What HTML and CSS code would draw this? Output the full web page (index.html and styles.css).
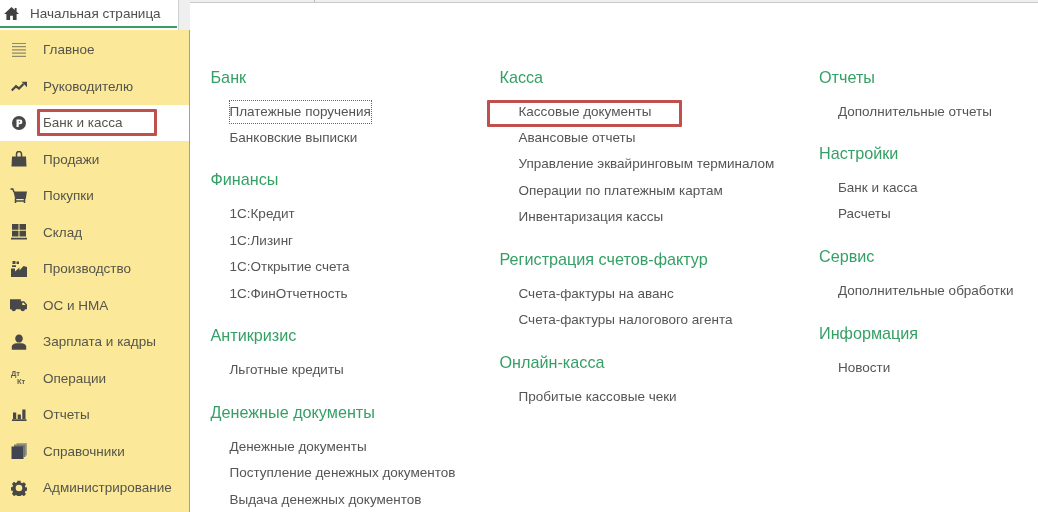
FILE: index.html
```html
<!DOCTYPE html>
<html lang="ru">
<head>
<meta charset="utf-8">
<title>Начальная страница</title>
<link rel="stylesheet" href="styles.css">
</head>
<body>
<div class="app">
  <div class="left">
    <div class="tabbar">
      <div class="tab">
        <svg class="tab-icon" viewBox="0 0 16 14"><path d="M8 0 0 7.500h2.500V14h4v-4.500h3V14h4V7.500H16L13.500 5.100V1h-2v2.200z"/></svg>
        <span>Начальная страница</span>
      </div>
    </div>
    <nav class="side">
      <a class="row"><svg class="ico lines" viewBox="0 0 16 16"><path d="M1 1.500h14M1 4.700h14M1 7.900h14M1 11.100h14M1 14.300h14"/></svg><span>Главное</span></a>
      <a class="row"><svg class="ico" viewBox="0 0 16 16"><path class="st" d="M.8 12.500 5 8.300l3 2.200L12.500 6"/><path d="M10.500 3.800H16V9.300z"/></svg><span>Руководителю</span></a>
      <a class="row active"><svg class="ico" viewBox="0 0 16 16"><path fill-rule="evenodd" d="M8 1a7 7 0 1 1 0 14A7 7 0 0 1 8 1zM5.500 4.500v7.500h2.200V9.300h1.300a2.400 2.400 0 0 0 0-4.800zm2.200 1.800h1.100a.7.700 0 0 1 0 1.300H7.700z"/></svg><span class="mark-wrap">Банк и касса<i class="mark mark-side"></i></span></a>
      <a class="row"><svg class="ico" viewBox="0 0 16 16"><path d="M1 5.500h14l.5 10H.5z"/><path class="st thin" d="M5.500 7V3a2.500 2.500 0 0 1 5 0V7"/></svg><span>Продажи</span></a>
      <a class="row"><svg class="ico cart" viewBox="0 0 17 16"><path d="M3.500 3.500H17l-1.300 7.500H5.200z"/><path class="st thin" d="M.5 1h2.300L4 4"/><path class="st thin" d="M5.500 10.500v4.500M14.500 10.500v4.500M5 13h10"/></svg><span>Покупки</span></a>
      <a class="row"><svg class="ico" viewBox="0 0 16 16"><path d="M1 0h6.500v5.700H1zM8.500 0H15v5.700H8.500zM1 6.700h6.500v5.700H1zM8.500 6.700H15v5.700H8.500zM0 13.700h16V15.500H0z"/></svg><span>Склад</span></a>
      <a class="row"><svg class="ico" viewBox="0 0 16 16"><path d="M0 16V7.500h4V10.500L8.500 6.500V9.500L12.500 5l3.500 1v10z"/><path d="M1.500 0h3v3h-3zM5.500 0.500H8V3H5.500zM1 4.200h4V6H1z"/></svg><span>Производство</span></a>
      <a class="row"><svg class="ico truck" viewBox="0 0 18 13"><path fill-rule="evenodd" d="M0 0h11.500v2H15l3 3.500v5H0zM13 3.500V6h3.500L14.500 3.500z"/><circle cx="4" cy="10.500" r="2.200"/><circle cx="13.500" cy="10.500" r="2.200"/></svg><span>ОС и НМА</span></a>
      <a class="row"><svg class="ico" viewBox="0 0 16 16"><path d="M8 .5c2.300 0 3.800 1.700 3.800 4 0 1.700-.9 3.300-2.300 4h-3C5.100 7.800 4.200 6.200 4.200 4.500c0-2.300 1.500-4 3.800-4z"/><path d="M.8 15.800v-3.300c0-1.800 2.400-3.100 4.700-3.300h5c2.300.2 4.700 1.500 4.700 3.300v3.300z"/></svg><span>Зарплата и кадры</span></a>
      <a class="row"><span class="dk"><b>Дт</b><b class="kt">Кт</b></span><span>Операции</span></a>
      <a class="row"><svg class="ico" viewBox="0 0 16 16"><path d="M2 5.500h3.200V12H2zM6.700 7.500h3.200V12H6.700zM11.300 2.500h3.200V12h-3.200zM1 12.300h14.500v1.700H1z"/></svg><span>Отчеты</span></a>
      <a class="row"><svg class="ico" viewBox="0 0 16 16"><path fill="#a5a38d" d="M5.500 0H16v12.500h-2V2.500H5.500z"/><path fill="#7b7a6a" d="M3 1.500h11.500V14h-2V4H3z"/><path fill="#3f4450" d="M.5 3.500h12V16H.5z"/></svg><span>Справочники</span></a>
      <a class="row"><svg class="ico" viewBox="0 0 16 16"><path fill-rule="evenodd" d="M6.500.7h3l.4 2 1.300.6 1.700-1.100 2.100 2.100-1.100 1.700.5 1.300 2 .4v3l-2 .4-.5 1.300 1.100 1.700-2.100 2.100-1.700-1.100-1.300.5-.4 2h-3l-.4-2-1.300-.5-1.700 1.100L.9 13.700 2 12l-.5-1.300-2-.4v-3l2-.4L2 5.600.9 3.900 3 1.800l1.700 1.100 1.300-.6zM8 4.700a3.300 3.300 0 1 0 0 6.600 3.300 3.300 0 0 0 0-6.600z"/></svg><span>Администрирование</span></a>
    </nav>
  </div>
  <div class="right">
    <div class="strip"><i class="tick"></i></div>
    <main class="content">
      <section class="col col-a">
        <h2>Банк</h2>
        <ul>
          <li><span class="focus">Платежные поручения</span></li>
          <li>Банковские выписки</li>
        </ul>
        <h2>Финансы</h2>
        <ul>
          <li>1С:Кредит</li>
          <li>1С:Лизинг</li>
          <li>1С:Открытие счета</li>
          <li>1С:ФинОтчетность</li>
        </ul>
        <h2>Антикризис</h2>
        <ul>
          <li>Льготные кредиты</li>
        </ul>
        <h2>Денежные документы</h2>
        <ul>
          <li>Денежные документы</li>
          <li>Поступление денежных документов</li>
          <li>Выдача денежных документов</li>
        </ul>
      </section>
      <section class="col col-b">
        <h2>Касса</h2>
        <ul>
          <li class="marked">Кассовые документы<i class="mark mark-main"></i></li>
          <li>Авансовые отчеты</li>
          <li>Управление эквайринговым терминалом</li>
          <li>Операции по платежным картам</li>
          <li>Инвентаризация кассы</li>
        </ul>
        <h2>Регистрация счетов-фактур</h2>
        <ul>
          <li>Счета-фактуры на аванс</li>
          <li>Счета-фактуры налогового агента</li>
        </ul>
        <h2>Онлайн-касса</h2>
        <ul>
          <li>Пробитые кассовые чеки</li>
        </ul>
      </section>
      <section class="col col-c">
        <h2>Отчеты</h2>
        <ul>
          <li>Дополнительные отчеты</li>
        </ul>
        <h2>Настройки</h2>
        <ul>
          <li>Банк и касса</li>
          <li>Расчеты</li>
        </ul>
        <h2>Сервис</h2>
        <ul>
          <li>Дополнительные обработки</li>
        </ul>
        <h2>Информация</h2>
        <ul>
          <li>Новости</li>
        </ul>
      </section>
    </main>
  </div>
</div>
</body>
</html>
```
FILE: styles.css
```css
* { box-sizing: border-box; }
html, body { margin: 0; height: 100%; overflow: hidden; }
body { font-family: "Liberation Sans", Arial, sans-serif; color: #555; background: #fff; }
.app { display: flex; width: 1038px; height: 512px; overflow: hidden; filter: blur(.35px); }

.left { width: 190px; flex: none; display: flex; flex-direction: column; background: #efefef; }
.tabbar { height: 30px; flex: none; display: flex; }
.tab { width: 179px; height: 30px; display: flex; align-items: center; gap: 11px; padding: 0 0 3px 4px; background: #fff; border-right: 1px solid #d0d0d0; position: relative; font-size: 13.500px; color: #4f4f4f; }
.tab::after { content: ""; position: absolute; left: 0; right: 1px; top: 26px; height: 2px; background: #3b9d6c; }
.tab-icon { width: 15px; height: 13px; fill: #404040; }

.side { flex: 1; background: #fbe899; border-right: 1px solid #9f9f95; padding-top: 1.700px; }
.row { display: flex; align-items: center; height: 36.500px; padding-left: 11px; font-size: 13.500px; color: #55554c; }
.row.active { background: #fff; }
.row > span:last-child { margin-left: 16px; }
.ico { width: 16px; height: 16px; flex: none; fill: #484846; }
.ico.cart { width: 17px; margin-left: -1px; }
.ico.truck { width: 17px; height: 13px; margin-left: -1px; }
.ico.lines { fill: none; stroke: #8f8a6a; stroke-width: 1.200; }
.st { fill: none; stroke: #484846; stroke-width: 2.200; }
.st.thin { stroke-width: 1.500; }
.dk { width: 16px; height: 16px; flex: none; display: flex; flex-direction: column; font-size: 7.500px; line-height: 8px; color: #5c5c50; }
.dk b { display: block; }
.dk .kt { padding-left: 6px; }

.mark-wrap { position: relative; }
.mark { position: absolute; border: 3px solid #c0504d; border-radius: 1px; pointer-events: none; }
.mark-side { left: -6px; top: -6px; width: 120px; height: 27px; }
.mark-main { left: -32px; top: 1.500px; width: 195px; height: 27px; }

.right { flex: 1; display: flex; flex-direction: column; background: #efefef; }
.strip { height: 2px; flex: none; position: relative; }
.tick { position: absolute; left: 124px; top: 0; width: 1px; height: 2px; background: #bbb; }
.content { flex: 1; display: flex; background: #fff; border-top: 1px solid #c9c9c9; padding: 61.500px 0 0 20.500px; }
.col { flex: none; }
.col-a { width: 289px; }
.col-b { width: 319.500px; }
h2 { margin: 0 0 8px; height: 26px; line-height: 24px; font-size: 16.200px; font-weight: 400; color: #35a066; white-space: nowrap; }
ul { list-style: none; margin: 0 0 16.200px; padding: 0 0 0 19px; }
li { height: 26.400px; line-height: 26.400px; font-size: 13.500px; white-space: nowrap; position: relative; }
.focus { outline: 1px dotted #666; outline-offset: 0; display: inline-block; line-height: 22px; vertical-align: middle; }
```
